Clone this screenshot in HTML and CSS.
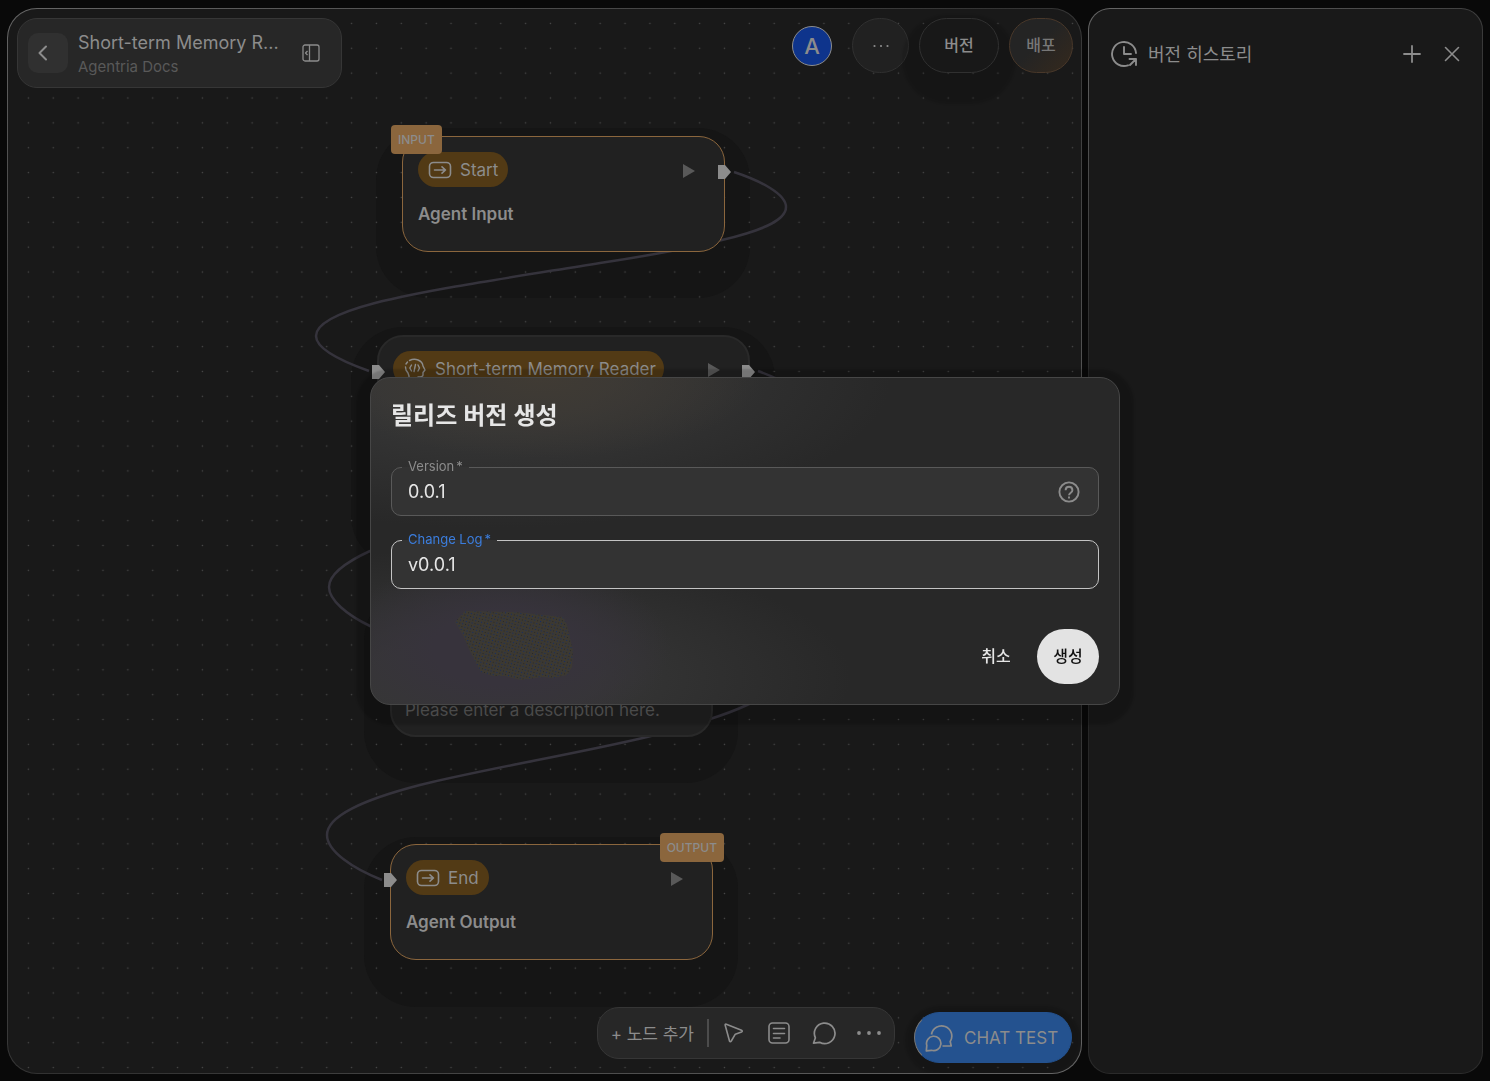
FILE: index.html
```
<!DOCTYPE html>
<html lang="ko">
<head>
    <meta charset="UTF-8">
    <meta name="viewport" content="width=device-width, initial-scale=1.0">
    <title>Agentria</title>
    <link rel="stylesheet" href="styles.css">
</head>
<body>
    <main class="canvas">
        <div class="board">
            <div class="node-shadow shadow-start"></div>
            <div class="node-shadow shadow-reader"></div>
            <div class="node-shadow shadow-middle"></div>
            <div class="node-shadow shadow-end"></div>

            <svg class="edges" width="100%" height="100%" fill="none">
                <defs>
                    <pattern id="grid" x="8" y="2" width="24.86" height="24.86" patternUnits="userSpaceOnUse">
                        <circle cx="12.4" cy="12.4" r="0.8" fill="#484848"/>
                    </pattern>
                </defs>
                <rect width="100%" height="100%" fill="url(#grid)"/>
                <g transform="translate(-8 -9)" stroke="#35333c" stroke-width="2.5">
                    <path d="M734 172C761 181 786 194 786 207C786 222 756 232 722 240C690 248 640 257 600 263C520 276 430 289 375 303C337 313 316 324 316 336C316 349 341 361 369 371"/>
                    <path d="M758 371C782 380 810 392 810 410C810 470 450 510 370 551C344 563 329 575 329 587C329 600 347 615 370 626L383 632"/>
                    <path d="M724 633C780 650 790 688 747 705C730 713 690 726 647 737C580 753 480 770 420 785C362 800 327 816 327 835C327 851 352 868 382 880"/>
                </g>
            </svg>

            <section class="node node-start">
                <span class="tag tag-input">INPUT</span>
                <div class="node-head">
                    <span class="chip">
                        <svg width="24" height="18" viewBox="0 0 24 18" fill="none" stroke="currentColor" stroke-width="1.6" stroke-linecap="round" stroke-linejoin="round"><rect x="1.5" y="1.5" width="21" height="15" rx="4"/><path d="M6.5 9h11M14 5.8L17.5 9L14 12.2"/></svg>
                        Start
                    </span>
                    <button class="play" type="button" aria-label="Run"><svg width="12" height="14" viewBox="0 0 12 14"><path d="M0 0L12 7L0 14z" fill="currentColor"/></svg></button>
                </div>
                <h2>Agent Input</h2>
                <svg class="port port-out" width="13" height="14" viewBox="0 0 13 14"><path d="M0 0H7L13 7L7 14H0z" fill="#8c8c8c"/></svg>
            </section>

            <section class="node node-reader">
                <svg class="port port-in" width="13" height="14" viewBox="0 0 13 14"><path d="M0 0H7L13 7L7 14H0z" fill="#8c8c8c"/></svg>
                <div class="node-head">
                    <span class="chip">
                        <svg width="24" height="24" viewBox="0 0 24 24" fill="none" stroke="currentColor" stroke-width="1.4" stroke-linecap="round" stroke-linejoin="round"><path d="M6.500 3.500C12 .8 19.200 3 20 9L22 13L20 15.500V18C20 20 17 20 15 20V22M4.500 5L3 7M2.500 10L3 13L5 16L6 19V22M8.500 8L6.800 11L8.500 14M12.500 7.500L11 14.500M15 8L16.500 11L15 14"/></svg>
                        Short-term Memory Reader
                    </span>
                    <button class="play" type="button" aria-label="Run"><svg width="12" height="14" viewBox="0 0 12 14"><path d="M0 0L12 7L0 14z" fill="currentColor"/></svg></button>
                </div>
                <svg class="port port-out" width="13" height="14" viewBox="0 0 13 14"><path d="M0 0H7L13 7L7 14H0z" fill="#8c8c8c"/></svg>
            </section>

            <section class="node node-middle">
                <p>Please enter a description here.</p>
            </section>

            <section class="node node-end">
                <span class="tag tag-output">OUTPUT</span>
                <svg class="port port-in" width="13" height="14" viewBox="0 0 13 14"><path d="M0 0H7L13 7L7 14H0z" fill="#8c8c8c"/></svg>
                <div class="node-head">
                    <span class="chip">
                        <svg width="24" height="18" viewBox="0 0 24 18" fill="none" stroke="currentColor" stroke-width="1.6" stroke-linecap="round" stroke-linejoin="round"><rect x="1.5" y="1.5" width="21" height="15" rx="4"/><path d="M6.5 9h11M14 5.8L17.5 9L14 12.2"/></svg>
                        End
                    </span>
                    <button class="play" type="button" aria-label="Run"><svg width="12" height="14" viewBox="0 0 12 14"><path d="M0 0L12 7L0 14z" fill="currentColor"/></svg></button>
                </div>
                <h2>Agent Output</h2>
            </section>
        </div>

        <header class="topbar">
            <div class="title-card">
                <button class="back" type="button" aria-label="Back">
                    <svg width="20" height="20" viewBox="0 0 20 20" fill="none" stroke="currentColor" stroke-width="2" stroke-linecap="round" stroke-linejoin="round"><path d="M12 3.500L5.500 10L12 16.500"/></svg>
                </button>
                <div class="title-text">
                    <h1>Short-term Memory R...</h1>
                    <p>Agentria Docs</p>
                </div>
                <button class="icon-btn" type="button" aria-label="Collapse">
                    <svg width="18" height="18" viewBox="0 0 18 18" fill="none" stroke="currentColor" stroke-width="1.3" stroke-linejoin="round"><rect x="1" y="1" width="16" height="16" rx="2"/><path d="M7.500 1V17M5.500 7L3.500 9L5.500 11"/></svg>
                </button>
            </div>
            <div class="actions">
                <span class="avatar">A</span>
                <button class="pill pill-more" type="button" aria-label="More">
                    <svg width="16" height="4" viewBox="0 0 16 4" fill="currentColor"><circle cx="1.500" cy="2" r="1.100"/><circle cx="8" cy="2" r="1.100"/><circle cx="14.500" cy="2" r="1.100"/></svg>
                </button>
                <button class="pill pill-version" type="button">버전</button>
                <button class="pill pill-deploy" type="button">배포</button>
            </div>
        </header>

        <footer class="bottombar">
            <div class="toolbar">
                <button class="add-node" type="button">+ 노드 추가</button>
                <span class="divider"></span>
                <button class="icon-btn" type="button" aria-label="Select">
                    <svg width="24" height="24" viewBox="0 0 24 24" fill="none" stroke="currentColor" stroke-width="1.6" stroke-linejoin="round"><path d="M3.200 4.200Q2.800 2.800 4.300 3.200L19.500 9.200Q21 10.200 19.500 11L13.300 13.200L9.300 20Q8.300 21.400 7.500 20z"/></svg>
                </button>
                <button class="icon-btn" type="button" aria-label="Note">
                    <svg width="24" height="24" viewBox="0 0 24 24" fill="none" stroke="currentColor" stroke-width="1.6" stroke-linecap="round"><rect x="2" y="2" width="20" height="20" rx="3.500"/><path d="M6.500 7.500H17.500M6.500 12.500H17.500M6.500 17H13"/></svg>
                </button>
                <button class="icon-btn" type="button" aria-label="Comment">
                    <svg width="24" height="24" viewBox="0 0 24 24" fill="none" stroke="currentColor" stroke-width="1.700" stroke-linejoin="round"><path d="M1.500 22.200L3.400 16.800A10.300 10.300 0 1 1 7.600 21.300z"/></svg>
                </button>
                <button class="icon-btn" type="button" aria-label="More tools">
                    <svg width="24" height="24" viewBox="0 0 24 24" fill="currentColor"><circle cx="2" cy="12" r="1.900"/><circle cx="12" cy="12" r="1.900"/><circle cx="22" cy="12" r="1.900"/></svg>
                </button>
            </div>
            <button class="chat-test" type="button">
                <svg width="28" height="28" viewBox="0 0 28 28" fill="none" stroke="currentColor" stroke-width="1.700" stroke-linejoin="round"><path d="M1.300 26.800L1.800 21.500A7.200 7.200 0 1 1 6.500 26.300z"/><path d="M6.500 10.500A10.200 10.200 0 1 1 25.200 17.500L26.200 22H17.500"/></svg>
                CHAT TEST
            </button>
        </footer>
    </main>

    <aside class="history">
        <header class="history-head">
            <svg width="28" height="28" viewBox="0 0 28 28" fill="none" stroke="currentColor" stroke-width="1.900" stroke-linecap="round" stroke-linejoin="round"><path d="M18 25.300A12 12 0 1 1 26 13M14 7V14H21M19.500 19H26V25M26 19L20 25"/></svg>
            <h2>버전 히스토리</h2>
            <button class="icon-btn" type="button" aria-label="Add">
                <svg width="20" height="20" viewBox="0 0 20 20" stroke="currentColor" stroke-width="1.800" stroke-linecap="round"><path d="M10 2V18M2 10H18"/></svg>
            </button>
            <button class="icon-btn" type="button" aria-label="Close">
                <svg width="20" height="20" viewBox="0 0 20 20" stroke="currentColor" stroke-width="1.600" stroke-linecap="round"><path d="M3.500 3.500L16.500 16.500M16.500 3.500L3.500 16.500"/></svg>
            </button>
        </header>
    </aside>

    <div class="overlay">
        <form class="dialog" role="dialog" aria-labelledby="dialogTitle">
            <svg class="glow" width="118" height="72" viewBox="0 0 118 72">
                <defs>
                    <pattern id="grain" width="6" height="6" patternUnits="userSpaceOnUse" patternTransform="rotate(14)">
                        <rect width="6" height="6" fill="#3c3932"/>
                        <path d="M1 1h1v1H1zM4 4h1v1H4z" fill="#142c66"/>
                        <path d="M4 1h1v1H4zM1 4h1v1H1z" fill="#282828"/>
                    </pattern>
                </defs>
                <path d="M10 0L60 1L108 6L112 14L118 40L117 56L112 64L98 67L88 66L66 69L50 65L38 65L26 61L20 50L14 38L8 24L0 11z" fill="url(#grain)"/>
            </svg>
            <h2 id="dialogTitle">릴리즈 버전 생성</h2>
            <fieldset class="field">
                <legend><label for="version">Version<span>*</span></label></legend>
                <div class="field-row">
                    <input type="text" id="version" value="0.0.1">
                    <button class="icon-btn" type="button" aria-label="Help">
                        <svg width="24" height="24" viewBox="0 0 24 24" fill="none" stroke="currentColor" stroke-width="1.900"><circle cx="12" cy="12" r="9.600"/><path d="M8.600 10.200C8.600 5.600 15.400 5.600 15.400 10.200C15.400 12.600 12 12.800 12 15.300"/><path d="M12 16.500V18.500"/></svg>
                    </button>
                </div>
            </fieldset>
            <fieldset class="field focused">
                <legend><label for="changeLog">Change Log<span>*</span></label></legend>
                <div class="field-row">
                    <input type="text" id="changeLog" value="v0.0.1">
                </div>
            </fieldset>
            <div class="dialog-actions">
                <button type="button" class="cancel-btn">취소</button>
                <button type="submit" class="create-btn">생성</button>
            </div>
        </form>
    </div>
</body>
</html>
```

FILE: styles.css
```
* {
    margin: 0;
    padding: 0;
    box-sizing: border-box;
}
body {
    display: flex;
    gap: 6px;
    height: 100vh;
    padding: 8px 7px 7px;
    overflow: hidden;
    background: #090909;
    color: #8c8c8c;
    font-family: Inter, "Noto Sans CJK KR", sans-serif;
    font-size: 16px;
}
button {
    border: none;
    background: none;
    color: inherit;
    font: inherit;
    cursor: pointer;
}
svg {
    display: block;
    flex-shrink: 0;
}
h1, h2 {
    font-weight: 400;
}
.icon-btn {
    display: flex;
}

/* Main canvas */
.canvas {
    position: relative;
    flex: 1;
    display: flex;
    flex-direction: column;
    justify-content: space-between;
    overflow: hidden;
    border: 1px solid transparent;
    border-radius: 30px;
    background: linear-gradient(#191919, #191919) padding-box,
        linear-gradient(160deg, #666 0%, #333 25%, #555 55%, #303030 75%, #666 100%) border-box;
}
.board, .edges {
    position: absolute;
    inset: 0;
}
.topbar {
    position: relative;
    display: flex;
    justify-content: space-between;
    align-items: flex-start;
    padding: 9px 8px 0 9px;
}
.title-card {
    display: flex;
    align-items: center;
    width: 325px;
    height: 70px;
    padding: 0 21px 0 10px;
    border: 1px solid #363636;
    border-radius: 20px;
    background: #272727;
}
.back {
    display: flex;
    align-items: center;
    width: 40px;
    height: 40px;
    padding-left: 6px;
    border-radius: 10px;
    background: #303030;
}
.title-text {
    flex: 1;
    padding: 3px 0 0 10px;
}
.title-text h1 {
    font-size: 18px;
    line-height: 24px;
}
.title-text p {
    color: #595959;
    font-size: 15px;
    line-height: 24px;
}
.actions {
    display: flex;
    align-items: center;
    gap: 10px;
}
.avatar {
    width: 40px;
    height: 40px;
    margin-right: 10px;
    border: 1px solid #8c8c8c;
    border-radius: 50%;
    background: #0e348c;
    font-size: 22px;
    font-weight: 500;
    line-height: 38px;
    text-align: center;
}
.pill {
    display: flex;
    justify-content: center;
    align-items: center;
    width: 64px;
    height: 55px;
    padding-bottom: 4px;
    border: 1px solid #303030;
    border-radius: 28px;
    background: #212121;
    font-weight: 500;
}
.pill-more {
    width: 57px;
    padding-bottom: 0;
}
.pill-version {
    width: 80px;
    background: #181818;
    box-shadow: 0 14px 2px 17px rgba(0, 0, 0, 0.12);
}
.pill-deploy {
    border-color: #49382a;
    background: linear-gradient(135deg, #242424 45%, #35291d);
    color: #777;
}

/* Nodes */
.node {
    position: absolute;
    width: 323px;
    height: 116px;
    padding: 15px;
    border: 1px solid #8b663d;
    border-radius: 26px;
    background: #212121;
}
.node-shadow {
    position: absolute;
    width: 374px;
    height: 170px;
    border-radius: 52px;
    background: #151515;
}
.node-start {
    left: 394px;
    top: 127px;
}
.shadow-start {
    left: 368px;
    top: 119px;
}
.node-reader {
    left: 369px;
    top: 326px;
    width: 373px;
    height: 150px;
    border: 2px solid #292929;
    padding: 14px;
}
.shadow-reader {
    left: 343px;
    top: 318px;
    width: 424px;
    height: 240px;
}
.node-middle {
    left: 382px;
    top: 587px;
    height: 141px;
    border: 2px solid #292929;
    padding: 100px 13px 0;
    color: #595959;
    font-size: 17px;
    line-height: 24px;
}
.shadow-middle {
    left: 356px;
    top: 579px;
    height: 195px;
}
.node-end {
    left: 382px;
    top: 835px;
}
.shadow-end {
    left: 356px;
    top: 828px;
}
.node-head {
    display: flex;
    justify-content: space-between;
    align-items: center;
    padding-right: 14px;
}
.chip {
    display: flex;
    align-items: center;
    gap: 8px;
    height: 35px;
    padding: 0 10px;
    border-radius: 18px;
    background: #523a15;
    font-size: 17px;
}
.node-reader .chip {
    padding-right: 8px;
}
.play {
    display: flex;
    padding-top: 2px;
    color: #595959;
}
.node h2 {
    margin-top: 15px;
    font-size: 17px;
    font-weight: 600;
    line-height: 24px;
}
.tag {
    position: absolute;
    top: -12px;
    padding: 0 7px;
    border-radius: 4px;
    background: #8b663d;
    font-size: 12px;
    font-weight: 500;
    line-height: 29px;
}
.tag-input {
    left: -12px;
}
.tag-output {
    right: -12px;
}
.port {
    position: absolute;
    top: 28px;
}
.port-in {
    left: -7px;
}
.port-out {
    right: -7px;
}

/* Bottom tools */
.bottombar {
    position: relative;
    display: flex;
    justify-content: flex-end;
    align-items: flex-start;
    gap: 19px;
    padding: 0 9px 10px;
}
.toolbar {
    display: flex;
    align-items: center;
    gap: 21px;
    height: 52px;
    padding: 0 13px;
    border: 1px solid #363636;
    border-radius: 22px;
    background: #272727;
}
.add-node {
    padding-bottom: 2px;
    font-size: 17px;
    white-space: nowrap;
}
.divider {
    width: 2px;
    height: 28px;
    margin: 0 -8px;
    background: #4c4c4c;
}
.chat-test {
    display: flex;
    align-items: center;
    gap: 11px;
    width: 158px;
    height: 51px;
    margin-top: 5px;
    padding: 0 10px;
    border: 1px solid #24528f;
    border-left-color: #777;
    border-radius: 26px;
    background: #24528f;
    box-shadow: 0 3px 2px 9px rgba(0, 0, 0, 0.12);
    font-size: 17px;
    white-space: nowrap;
}

/* Version history */
.history {
    width: 395px;
    border: 1px solid transparent;
    border-radius: 22px;
    background: linear-gradient(#191919, #191919) padding-box,
        linear-gradient(150deg, #666 0%, #242424 30%, #2c2c2c 100%) border-box;
}
.history-head {
    display: flex;
    align-items: center;
    gap: 20px;
    padding: 31px 20px 0 21px;
}
.history-head h2 {
    flex: 1;
    margin-left: -10px;
    padding-top: 2px;
    font-size: 18px;
    line-height: 26px;
}

/* Release dialog */
.overlay {
    position: fixed;
    inset: 0;
    display: flex;
    justify-content: center;
    align-items: center;
}
.dialog {
    position: relative;
    width: 750px;
    max-width: 100%;
    padding: 20px;
    border: 1px solid #464646;
    border-radius: 20px;
    background:
        radial-gradient(ellipse 220px 80px at 170px 0, #403b34, transparent),
        radial-gradient(ellipse 400px 150px at 120px 0, #363636 30%, transparent),
        radial-gradient(ellipse 170px 90px at 130px 270px, #37333c 40%, transparent),
        radial-gradient(ellipse 370px 130px at 110px 300px, #363636 30%, transparent),
        #282828;
    box-shadow: 0 6px 2px 14px rgba(0, 0, 0, 0.16);
}
.glow {
    position: absolute;
    left: 84px;
    top: 233px;
}
.dialog h2 {
    margin-bottom: 24px;
    color: #e6e6e6;
    font-size: 24px;
    font-weight: 600;
    line-height: 36px;
}
.field {
    min-width: 0;
    margin-bottom: 15px;
    padding: 0 10px;
    border: 1px solid #595959;
    border-radius: 10px;
    background: #333;
}
.field legend {
    padding: 0 6px 4px;
    font-size: 13px;
    line-height: 16px;
}
.field legend label {
    display: block;
}
.field legend span {
    margin-left: 2px;
}
.field-row {
    display: flex;
    align-items: center;
    height: 37px;
    padding: 0 7px 9px 6px;
}
.field input {
    flex: 1;
    min-width: 0;
    height: 28px;
    border: none;
    outline: none;
    background: none;
    color: #e6e6e6;
    font: inherit;
    font-size: 18px;
}
.field.focused {
    border-color: #c4c4c4;
}
.focused legend {
    color: #3b7ddd;
}
.dialog-actions {
    display: flex;
    justify-content: flex-end;
    gap: 10px;
    margin-top: 40px;
}
.dialog-actions button {
    width: 62px;
    height: 55px;
    padding-bottom: 3px;
    border-radius: 28px;
    color: #e6e6e6;
    font-weight: 500;
}
.dialog-actions .create-btn {
    background: #e3e3e3;
    color: #111;
}
```
